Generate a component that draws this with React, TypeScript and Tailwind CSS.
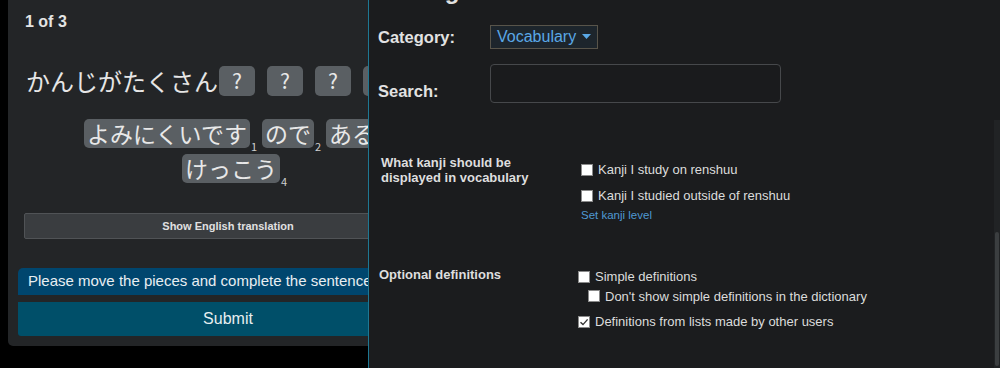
import React from "react";

const jp = { fontFamily: '"Noto Sans CJK JP", "Noto Sans", sans-serif' };

function Piece({ text, n }: { text: string; n: number }) {
  return (
    <span className="inline-flex items-end mr-[5px]">
      <span className="bg-[#5a5f63] rounded-[5px] h-[29px] px-[3px] flex items-center text-[23px] leading-none text-[#e8e8e8]">
        {text}
      </span>
      <span className="text-[11px] leading-none text-[#cfcfcf] ml-[1px] mb-[-4px] w-[6px]">{n}</span>
    </span>
  );
}

function Check({ checked, label, indent }: { checked?: boolean; label: string; indent?: boolean }) {
  return (
    <div className={`flex items-center gap-[5px] ${indent ? "ml-[10px]" : ""}`}>
      <span className="w-[12px] h-[12px] bg-white border border-[#8a8a8a] flex items-center justify-center">
        {checked && (
          <svg width="10" height="10" viewBox="0 0 10 10">
            <path d="M1.5 5.2 L4 7.6 L8.6 2.4" stroke="#333" strokeWidth="1.4" fill="none" />
          </svg>
        )}
      </span>
      <span className="text-[13px] text-[#dcdcdc]">{label}</span>
    </div>
  );
}

export default function App() {
  return (
    <div
      className="relative w-[1000px] h-[368px] bg-black overflow-hidden"
      style={{ fontFamily: '"Liberation Sans", Arial, sans-serif' }}
    >
      {/* left card */}
      <div className="ml-[8px] w-[440px] h-[346px] bg-[#232527] rounded-b-[5px] px-[10px] flex flex-col">
        <div className="flex items-start justify-between pl-[7px] pt-[6px] h-[34px]">
          <span className="text-[16px] font-bold text-[#e4e4e4] mt-[4px]">1 of 3</span>
          <span className="bg-[#b8732a] rounded-[3px] h-[28px] w-[60px] -mr-[2px] text-[#f0e0c8] text-[13px] flex items-center pl-[4px]" style={{ fontFamily: '"Liberation Serif", serif' }}>
            I
          </span>
        </div>
        <div className="flex items-center justify-start pl-[8px] mt-[32px] h-[30px] text-[24px] text-[#e6e6e6] whitespace-nowrap" style={jp}>
          <span className="mr-[1px]">かんじがたくさん</span>
          {[0, 1, 2, 3].map((i) => (
            <span key={i} className="shrink-0 w-[36px] h-[30px] bg-[#5a5f63] rounded-[5px] flex items-center justify-center mr-[12px] text-[21px] text-[#e8e8e8]">
              ?
            </span>
          ))}
          <span className="-ml-[8px]">。</span>
        </div>
        <div className="flex flex-wrap justify-center mt-[23px] pl-[46px] pr-[28px] gap-y-[6px]" style={jp}>
          <Piece text="よみにくいです" n={1} />
          <Piece text="ので" n={2} />
          <Piece text="ある" n={3} />
          <Piece text="けっこう" n={4} />
        </div>
        <div className="mx-[6px] mt-[30px] h-[26px] bg-[#3a3d40] border border-[#505356] rounded-[2px] flex items-center justify-center text-[11px] font-bold text-[#e0e0e0]">
          Show English translation
        </div>
        <div className="mt-[29px] h-[27px] bg-[#00466e] rounded-t-[5px] px-[10px] flex items-center text-[15px] text-[#e8eef2] whitespace-nowrap overflow-hidden">
          Please move the pieces and complete the sentence.
        </div>
        <div className="mt-[7px] h-[34px] bg-[#004f69] rounded-b-[3px] flex items-center justify-center text-[16px] text-[#e6eef0]">
          Submit
        </div>
      </div>

      {/* settings modal overlay */}
      <div className="absolute left-[368px] top-0 w-[632px] h-[368px] bg-[#1b1c1e] border-l border-[#1e7893] pl-[9px]">
        <div className="-mt-[21px] h-[24px] text-[24px] font-bold text-[#e0e0e0] leading-[24px]">Settings</div>
        <div className="flex items-center mt-[22px] h-[24px]">
          <span className="w-[112px] text-[16.5px] font-bold text-[#e2e2e2]">Category:</span>
          <span className="h-[24px] border border-[#58544a] bg-[#1d252c] px-[6px] flex items-center gap-[6px] text-[16px] text-[#5aa8e6]">
            Vocabulary
            <svg width="9" height="6" viewBox="0 0 9 6">
              <path d="M0 0 H9 L4.5 5 Z" fill="#5aa8e6" />
            </svg>
          </span>
        </div>
        <div className="flex mt-[15px]">
          <span className="w-[112px] text-[16.5px] font-bold text-[#e2e2e2] mt-[15px]">Search:</span>
          <span className="w-[291px] h-[39px] border border-[#46484b] rounded-[4px] bg-[#1a1b1d]" />
        </div>
        <div className="flex mt-[51px]">
          <div className="w-[203px] pl-[3px] text-[13px] font-bold text-[#dedede] leading-[15px]">
            What kanji should be<br />displayed in vocabulary
          </div>
          <div className="flex flex-col pt-[5px]">
            <Check label="Kanji I study on renshuu" />
            <div className="h-[7px]" />
            <Check label="Kanji I studied outside of renshuu" />
            <span className="text-[11.5px] text-[#4f98d2] mt-[1px]">Set kanji level</span>
          </div>
        </div>
        <div className="flex mt-[41px]">
          <div className="w-[203px] pl-[1px] text-[13px] font-bold text-[#dedede]">Optional definitions</div>
          <div className="flex flex-col -ml-[3px] pt-[2px]">
            <Check label="Simple definitions" />
            <Check indent label="Don't show simple definitions in the dictionary" />
            <div className="h-[6px]" />
            <Check checked label="Definitions from lists made by other users" />
          </div>
        </div>
        {/* scrollbar */}
        <div className="absolute right-0 top-[120px] w-[6px] h-[248px] bg-[#212325]">
          <div className="absolute left-[1px] top-[112px] w-[4px] h-[134px] bg-[#3b3e40] rounded-[2px]" />
        </div>
      </div>
    </div>
  );
}
